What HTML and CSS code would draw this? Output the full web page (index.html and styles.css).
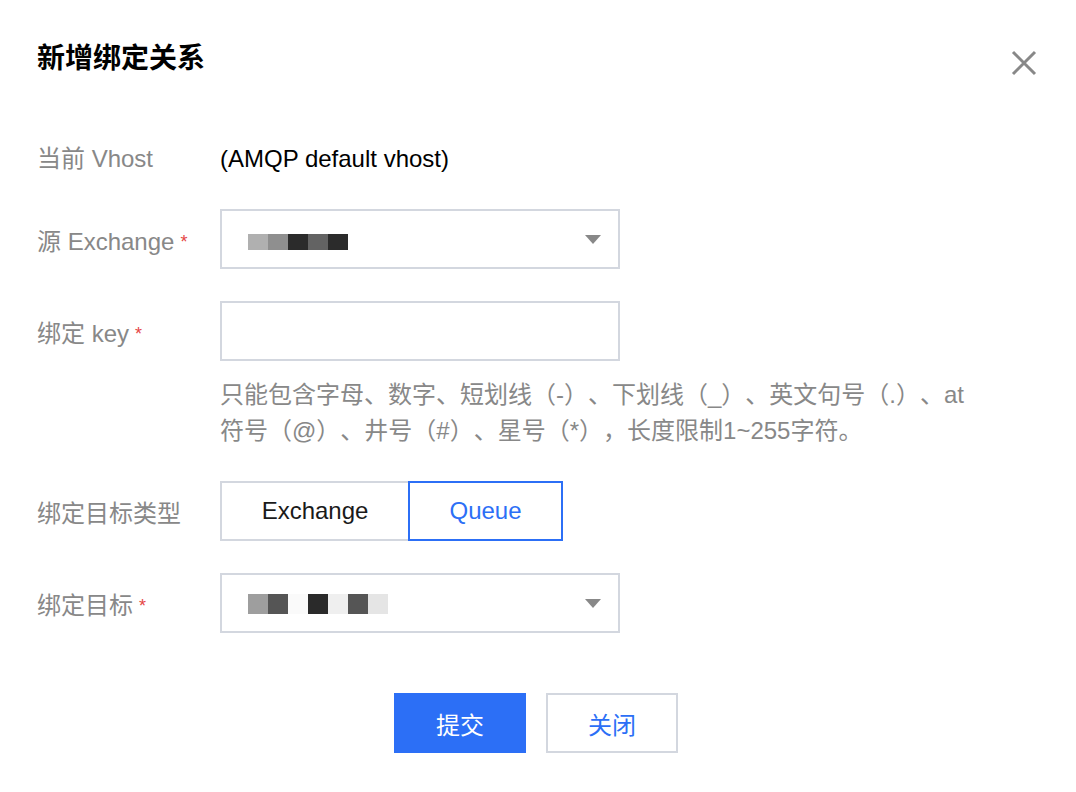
FILE: index.html
```html
<!DOCTYPE html>
<html lang="zh-CN">
<head>
<meta charset="utf-8">
<title>新增绑定关系</title>
<link rel="stylesheet" href="styles.css">
</head>
<body>
<div class="dialog">
  <div class="header">
    <h1 class="title">新增绑定关系</h1>
    <button class="close" aria-label="关闭">
      <svg width="26" height="26" viewBox="0 0 26 26"><path d="M2 2 L24 24 M24 2 L2 24" stroke="#888" stroke-width="3" fill="none"/></svg>
    </button>
  </div>

  <div class="form">
    <div class="row row-text">
      <div class="label">当前 Vhost</div>
      <div class="value">(AMQP default vhost)</div>
    </div>

    <div class="row">
      <div class="label">源 Exchange<span class="req">*</span></div>
      <div class="control">
        <div class="select">
          <div class="mask mask-a">
            <span class="c-b0"></span><span class="c-8f"></span><span class="c-2b"></span><span class="c-63"></span><span class="c-2b"></span>
          </div>
          <span class="arrow"></span>
        </div>
      </div>
    </div>

    <div class="row">
      <div class="label">绑定 key<span class="req">*</span></div>
      <div class="control">
        <div class="input"></div>
        <p class="help">只能包含字母、数字、短划线（-）、下划线（_）、英文句号（.）、at符号（@）、井号（#）、星号（*），长度限制1~255字符。</p>
      </div>
    </div>

    <div class="row">
      <div class="label">绑定目标类型</div>
      <div class="control">
        <div class="radio-group">
          <span class="radio radio-exchange">Exchange</span>
          <span class="radio radio-queue active">Queue</span>
        </div>
      </div>
    </div>

    <div class="row">
      <div class="label">绑定目标<span class="req">*</span></div>
      <div class="control">
        <div class="select">
          <div class="mask mask-b">
            <span class="c-9e"></span><span class="c-55"></span><span class="c-fa"></span><span class="c-2a"></span><span class="c-ef"></span><span class="c-55"></span><span class="c-e5"></span>
          </div>
          <span class="arrow"></span>
        </div>
      </div>
    </div>
  </div>

  <div class="footer">
    <button class="btn btn-primary">提交</button>
    <button class="btn btn-default">关闭</button>
  </div>
</div>
</body>
</html>
```

FILE: styles.css
```css
* { box-sizing: border-box; }

html, body {
  margin: 0;
  padding: 0;
  background: #fff;
}

body {
  font-family: "Liberation Sans", "Noto Sans CJK SC", sans-serif;
  font-size: 24px;
  color: #000;
  text-spacing-trim: space-all;
}

.dialog {
  padding: 39px 37px 0 37px;
}

.header {
  display: flex;
  align-items: center;
  justify-content: space-between;
  height: 40px;
  margin-bottom: 62px;
}

.title {
  margin: 0;
  font-size: 28px;
  line-height: 40px;
  font-weight: bold;
  color: #000;
}

.close {
  border: 0;
  background: none;
  padding: 0;
  width: 26px;
  height: 26px;
  margin-right: 2px;
  margin-top: 8px;
  cursor: pointer;
  display: flex;
}

.form {
  display: flex;
  flex-direction: column;
}

.row {
  display: grid;
  grid-template-columns: 183px 1fr;
  align-items: start;
  margin-bottom: 32px;
}

.label {
  height: 60px;
  display: flex;
  align-items: center;
  color: #888;
  white-space: nowrap;
}

.row-text .label,
.row-text .value {
  height: 36px;
  line-height: 36px;
}

.value {
  color: #000;
}

.req {
  color: #e54545;
  font-size: 18px;
  margin-left: 6px;
  position: relative;
  top: 3px;
}

.select,
.input {
  width: 400px;
  height: 60px;
  border: 2px solid #d3d7df;
  background: #fff;
}

.select {
  display: flex;
  align-items: center;
  justify-content: space-between;
  padding: 0 17px 0 26px;
}

.mask {
  display: flex;
}

.mask span {
  width: 20px;
  display: block;
}

.mask-a span { height: 16px; }
.mask-a { margin-top: 6px; }
.mask-b span { height: 20px; }
.mask-b { margin-top: 2px; }

.c-b0 { background: #b0b0b0; }
.c-8f { background: #8f8f8f; }
.c-2b { background: #2b2b2b; }
.c-63 { background: #636363; }
.c-9e { background: #9e9e9e; }
.c-55 { background: #555555; }
.c-fa { background: #fafafa; }
.c-2a { background: #2a2a2a; }
.c-ef { background: #efefef; }
.c-e5 { background: #e5e5e5; }

.arrow {
  width: 0;
  height: 0;
  border-left: 8px solid transparent;
  border-right: 8px solid transparent;
  border-top: 9px solid #888;
}

.help {
  margin: 16px 0 0 0;
  width: 752px;
  color: #888;
  font-size: 24px;
  line-height: 36px;
  text-spacing-trim: space-all;
}

.radio-group {
  display: flex;
}

.radio {
  height: 60px;
  line-height: 56px;
  text-align: center;
  border: 2px solid #d3d7df;
  color: #1a1a1a;
  background: #fff;
}

.radio-exchange { width: 190px; }
.radio-queue { width: 155px; }

.radio + .radio {
  margin-left: -2px;
}

.radio.active {
  border-color: #2c6ff6;
  color: #2c6ff6;
  position: relative;
}

.footer {
  display: flex;
  justify-content: center;
  gap: 20px;
  margin-top: 28px;
  padding-right: 4px;
}

.btn {
  width: 132px;
  height: 60px;
  font-family: "Liberation Sans", "Noto Sans CJK SC", sans-serif;
  font-size: 24px;
  cursor: pointer;
}

.btn-primary {
  background: #2c6ff6;
  border: 0;
  color: #fff;
}

.btn-default {
  background: #fff;
  border: 2px solid #d3d7df;
  color: #2c6ff6;
}
```
